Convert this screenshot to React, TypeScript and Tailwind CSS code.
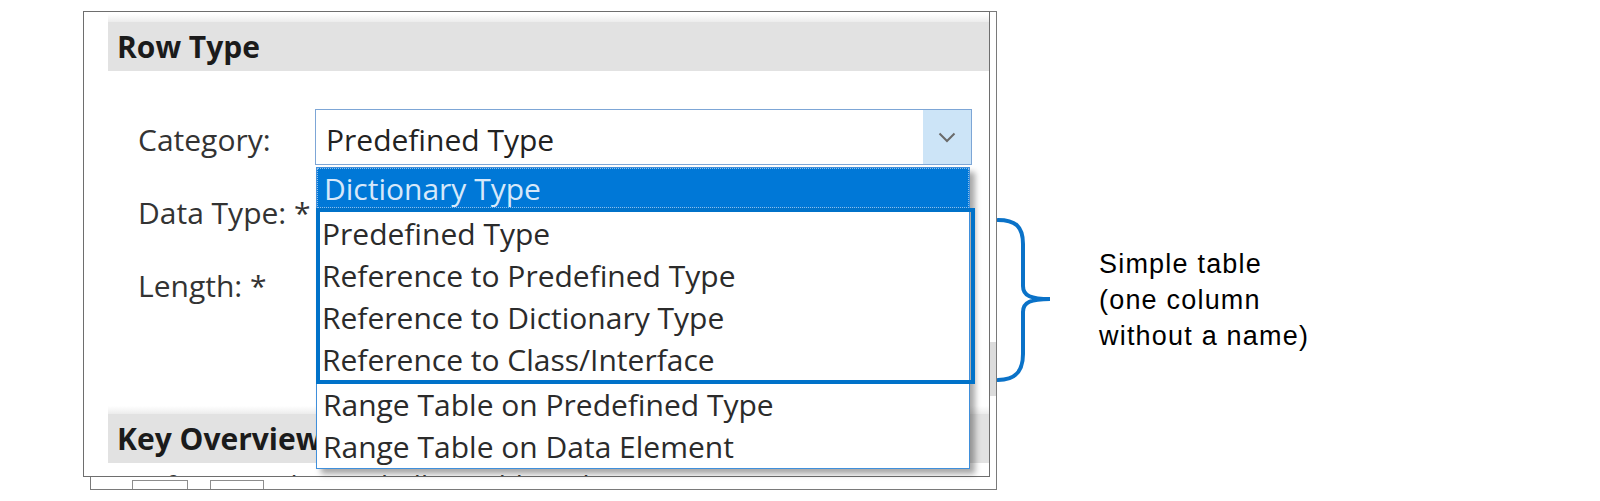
import { ReactNode } from "react";

const ui = "font-['Open_Sans','Noto_Sans',sans-serif]";

function Band({ children }: { children: ReactNode }) {
  return (
    <div className="pl-[24px]">
      <div className="h-[8px] bg-gradient-to-b from-white to-[#ececec]" />
      <div className="h-[49px] bg-[#e2e2e2] flex items-center pl-[9px] text-[30px] font-bold text-[#1b1b1b] leading-none">
        {children}
      </div>
    </div>
  );
}

function Option({ label, framed }: { label: string; framed?: boolean }) {
  return (
    <div
      className={
        framed
          ? "h-[42px] pl-[2px] pt-[1px] leading-[42px] text-[30px] text-[#2b2b2b] whitespace-nowrap"
          : "h-[42px] pl-[6px] leading-[42px] text-[30px] text-[#2b2b2b] whitespace-nowrap"
      }
    >
      {label}
    </div>
  );
}

function Dropdown() {
  return (
    <div className="absolute left-0 top-[57px] z-20 w-[654px] bg-white border border-[#3f8fdb] shadow-[5px_5px_6px_rgba(0,0,0,0.35)]">
      <div className="h-[40px] bg-[#0078d7] border border-dotted border-[#8fbde9] pl-[6px] pt-[2px] leading-[36px] text-[30px] text-[#d6e8fa] whitespace-nowrap overflow-hidden">
        Dictionary Type
      </div>
      <div className="-ml-[1px] -mr-[6px] border-4 border-[#0072c9]">
        <Option framed label="Predefined Type" />
        <Option framed label="Reference to Predefined Type" />
        <Option framed label="Reference to Dictionary Type" />
        <Option framed label="Reference to Class/Interface" />
      </div>
      <Option label="Range Table on Predefined Type" />
      <Option label="Range Table on Data Element" />
    </div>
  );
}

function Chevron() {
  return (
    <svg width="18" height="11" viewBox="0 0 18 11" fill="none">
      <path d="M1.5 1.5 L9 9 L16.5 1.5" stroke="#6a6a6a" strokeWidth="2" />
    </svg>
  );
}

export default function App() {
  return (
    <div className={`w-[1600px] h-[501px] bg-white overflow-hidden flex items-start ${ui}`}>
      {/* pasted screenshot, two stacked frames */}
      <div className="relative ml-[83px] mt-[11px] w-[914px] h-[479px] shrink-0">
        <div className="absolute left-[7px] top-0 right-0 bottom-0 border border-[#7a7a7a] bg-white overflow-hidden flex flex-col">
          <div className="mt-[330px] h-[54px] bg-gradient-to-r from-[#e6e6e6] to-[#dcdcdc]" />
          <div className="mt-auto h-[9px] flex items-start gap-[22px] pl-[41px]">
            <div className="w-[56px] h-[20px] border border-[#8d8d8d]" />
            <div className="w-[54px] h-[20px] border border-[#8d8d8d]" />
          </div>
        </div>

        <div className="relative z-10 w-[907px] h-[466px] border border-[#6e6e6e] bg-white flex flex-col">
          <div className="pt-[2px]">
            <Band>Row Type</Band>
          </div>

          <div className="pl-[54px] text-[30px] text-[#333]">
            <div className="mt-[38px] flex items-center h-[56px]">
              <div className="w-[177px] pt-[4px]">Category:</div>
              <div className="relative w-[657px] h-[56px] border border-[#7da6d6] flex">
                <div className="flex-1 pl-[10px] pt-[4px] flex items-center text-[#222]">Predefined Type</div>
                <div className="w-[48px] bg-[#cce4f7] flex items-center justify-center">
                  <Chevron />
                </div>
                <Dropdown />
              </div>
            </div>
            <div className="mt-[19px] h-[56px] flex items-center">Data Type: *</div>
            <div className="mt-[17px] h-[56px] flex items-center">Length: *</div>
          </div>

          <div className="mt-[93px]">
            <Band>Key Overview</Band>
          </div>
          <div className="mt-[4px] h-[9px] overflow-hidden pl-[36px]">
            <div className="text-[28px] leading-[40px] text-[#333] -mt-[2px] whitespace-nowrap">Prüfungsmodus &nbsp; Tabellen-Schlüssel</div>
          </div>
        </div>
      </div>

      {/* annotation */}
      <svg width="56" height="168" viewBox="0 0 56 168" fill="none" className="mt-[216px] shrink-0">
        <path
          d="M1 4 C 18 4, 26 10, 26 28 V 70 C 26 80, 34 83, 53 83 C 34 83, 26 86, 26 96 V 138 C 26 156, 18 164, 1 164"
          stroke="#0a72c8"
          strokeWidth="4"
          strokeLinecap="round"
        />
      </svg>
      <div className="ml-[46px] mt-[246px] font-['Liberation_Sans',Arial,sans-serif] text-[27px] leading-[36px] tracking-[1.2px] text-black">
        <div>Simple table</div>
        <div>(one column</div>
        <div>without a name)</div>
      </div>
    </div>
  );
}
